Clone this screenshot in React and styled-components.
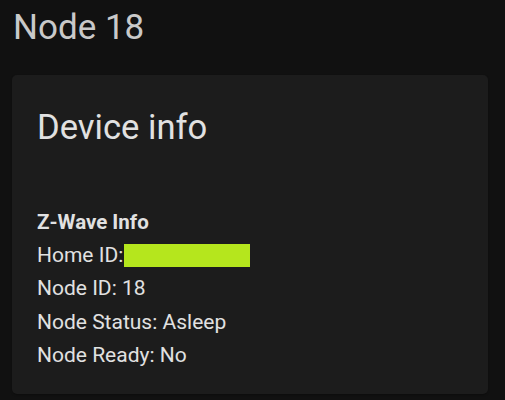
import React from "react";
import styled, { createGlobalStyle } from "styled-components";

const GlobalStyle = createGlobalStyle`
  body {
    margin: 0;
    background: #111111;
    font-family: Roboto, "Noto Sans", sans-serif;
  }
`;

const Page = styled.div`
  padding: 4px 12px 12px 12px;
  min-height: 400px;
  box-sizing: border-box;
`;

const PageTitle = styled.h1`
  margin: 0;
  font-size: 35px;
  font-weight: 400;
  line-height: 48px;
  color: #c9c9c9;
  padding-left: 1px;
`;

const Card = styled.div`
  margin-top: 23px;
  width: 476px;
  background: #1c1c1c;
  border-radius: 5px;
  padding: 28px 25px 22px 25px;
  box-sizing: border-box;
  color: #e1e1e1;
  box-shadow: 0 1px 2px rgba(0, 0, 0, 0.3);
`;

const CardHeader = styled.h2`
  margin: 0;
  font-size: 34.6px;
  font-weight: 400;
  line-height: 48px;
`;

const Section = styled.div`
  margin-top: 54px;
  display: flex;
  flex-direction: column;
`;

const SectionTitle = styled.div`
  font-size: 20.5px;
  font-weight: 700;
  line-height: 34px;
`;

const Line = styled.div`
  font-size: 21px;
  line-height: 33.3px;
  display: flex;
  align-items: center;
`;

const Redacted = styled.span`
  display: inline-block;
  width: 126px;
  height: 23px;
  background: #b5e61d;
  margin-left: 1px;
`;

export default function App() {
  return (
    <>
      <GlobalStyle />
      <Page>
        <PageTitle>Node 18</PageTitle>
        <Card>
          <CardHeader>Device info</CardHeader>
          <Section>
            <SectionTitle>Z-Wave Info</SectionTitle>
            <Line>
              Home ID:<Redacted />
            </Line>
            <Line>Node ID: 18</Line>
            <Line>Node Status: Asleep</Line>
            <Line>Node Ready: No</Line>
          </Section>
        </Card>
      </Page>
    </>
  );
}
